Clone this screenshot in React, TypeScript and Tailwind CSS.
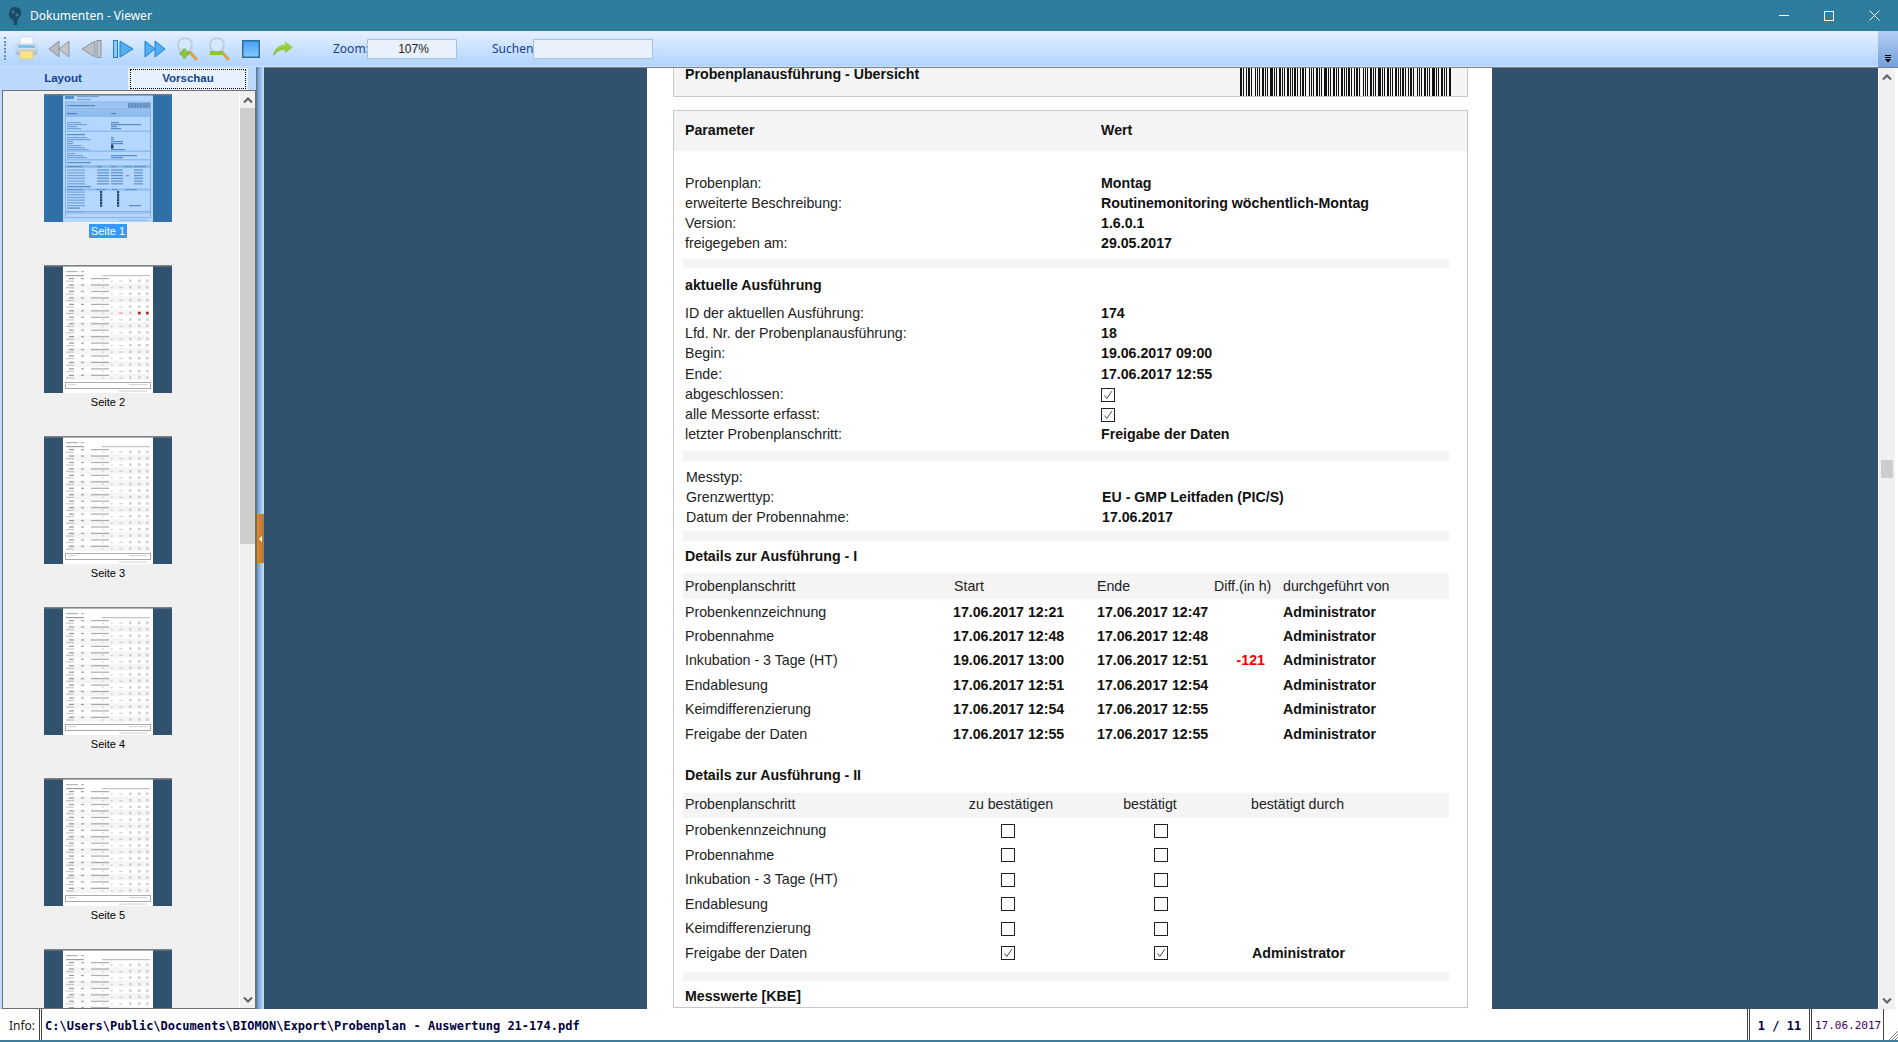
import React from "react";

const sans = "font-['Liberation_Sans',Arial,sans-serif]";

function Check({ checked }: { checked?: boolean }) {
  return (
    <svg width="14" height="14" viewBox="0 0 14 14" className="block">
      <rect x="0.5" y="0.5" width="13" height="13" fill="#fff" stroke="#222" />
      {checked && <path d="M3.5 7.5 L5.8 10.5 L10.8 3.2" fill="none" stroke="#333" strokeWidth="0.9" />}
    </svg>
  );
}

function Row({ label, value, check, shift }: { label: string; value?: string; check?: boolean; shift?: boolean }) {
  return (
    <div className="flex h-[20.3px] items-center">
      <div className={shift ? "w-[416px] pl-px text-[#222]" : "w-[416px] text-[#222]"}>{label}</div>
      {check ? <Check checked /> : <div className={shift ? "pl-px font-bold text-[#111]" : "font-bold text-[#111]"}>{value}</div>}
    </div>
  );
}

const Strip = ({ className }: { className: string }) => <div className={"-ml-[2px] w-[766px] bg-[#f4f4f4] " + className} />;
const Heading = ({ children, className }: { children: React.ReactNode; className: string }) => (
  <div className={"flex h-[20px] items-center font-bold text-[#111] " + className}>{children}</div>
);

const table1 = [
  ["Probenkennzeichnung", "17.06.2017 12:21", "17.06.2017 12:47", ""],
  ["Probennahme", "17.06.2017 12:48", "17.06.2017 12:48", ""],
  ["Inkubation - 3 Tage (HT)", "19.06.2017 13:00", "17.06.2017 12:51", "-121"],
  ["Endablesung", "17.06.2017 12:51", "17.06.2017 12:54", ""],
  ["Keimdifferenzierung", "17.06.2017 12:54", "17.06.2017 12:55", ""],
  ["Freigabe der Daten", "17.06.2017 12:55", "17.06.2017 12:55", ""],
];
const table2 = ["Probenkennzeichnung", "Probennahme", "Inkubation - 3 Tage (HT)", "Endablesung", "Keimdifferenzierung", "Freigabe der Daten"];

function Barcode() {
  const bars: number[] = [];
  let x = 0;
  const pat = [2, 1, 1, 2, 1, 1, 1, 1, 2, 1, 1, 3, 1, 1, 2, 1, 1, 2, 1, 1];
  let i = 0;
  while (x < 211) {
    bars.push(x, pat[i % pat.length]);
    x += pat[i % pat.length] + pat[(i + 7) % pat.length];
    i++;
  }
  return (
    <svg width="212" height="28" className="block">
      {bars.map((v, k) => (k % 2 === 0 ? <rect key={k} x={v} y="0" width={bars[k + 1]} height="28" fill="#111" /> : null))}
    </svg>
  );
}

function ThumbArt({ first, index }: { first?: boolean; index: number }) {
  const ink = first ? "#3f78b8" : "#777";
  const band = first ? "#8fbcec" : "#e4e4e4";
  const frame = first ? "#7fa9d8" : "#b0b0b0";
  const pageFill = first ? "#b3d7ff" : "#ffffff";
  const bg = first ? "#316fa9" : "#30526f";
  const els: React.ReactNode[] = [];
  const text = (x: number, y: number, w: number, o = 0.55, c = ink) =>
    els.push(<rect key={els.length} x={x} y={y} width={w} height="1.2" fill={c} opacity={o} />);
  if (first) {
    els.push(<rect key="l" x="21" y="2" width="9" height="3" fill="#4d8fd0" />);
    text(33, 2, 22); text(33, 5, 14);
    els.push(<rect key="h" x="21.5" y="8" width="85" height="7" fill="#9cc5f2" stroke={frame} strokeWidth="0.7" />);
    text(23, 11, 28, 0.8);
    for (let k = 0; k < 22; k++) els.push(<rect key={"b" + k} x={84 + k} y="9" width={k % 3 === 2 ? 0.4 : 0.7} height="5" fill="#2d5f96" opacity="0.75" />);
    els.push(<rect key="f" x="21.5" y="16" width="85" height="103" fill="none" stroke={frame} strokeWidth="0.8" />);
    els.push(<rect key="hd" x="22" y="17" width="84" height="6" fill={band} />);
    text(23, 19, 10, 0.8); text(67, 19, 5, 0.8);
    [28, 30, 32, 34].forEach((y, n) => { text(23, y, [14, 20, 10, 14][n]); text(67, y, [8, 30, 6, 10][n], 0.8); });
    els.push(<rect key="s1" x="22" y="36.5" width="84" height="1.5" fill={band} />);
    text(23, 40, 18, 0.8);
    [43, 45, 47, 49, 51, 53, 55].forEach((y, n) => { text(23, y, [20, 24, 6, 6, 14, 18, 22][n]); });
    [43, 45, 47, 49, 55].forEach((y, n) => text(67, y, [3, 3, 12, 12, 14][n], 0.8));
    els.push(<rect key="c1" x="67" y="50.5" width="2.4" height="4" fill="#1c3f66" />);
    els.push(<rect key="s2" x="22" y="56.5" width="84" height="1.5" fill={band} />);
    [59, 61, 63].forEach((y, n) => { text(23, y, [8, 16, 20][n]); if (n) text(67, y, [0, 26, 12][n], 0.8); });
    els.push(<rect key="s3" x="22" y="65" width="84" height="1.5" fill={band} />);
    text(23, 68, 24, 0.8);
    els.push(<rect key="b1" x="22" y="71" width="84" height="3" fill={band} />);
    text(23, 72, 16); text(53, 72, 5); text(67, 72, 5); text(80, 72, 8); text(90, 72, 12);
    for (let n = 0; n < 6; n++) {
      const y = 75.5 + n * 2.75;
      text(23, y, 18); text(53, y, 12, 0.75); text(67, y, 12, 0.75); text(90, y, 9, 0.75);
      if (n === 2) els.push(<rect key="red" x="82" y={y} width="3" height="1.2" fill="#d06a80" />);
    }
    text(23, 92, 24, 0.8);
    els.push(<rect key="b2" x="22" y="94.5" width="84" height="2" fill={band} />);
    text(23, 95, 16); text(52, 95, 10); text(68, 95, 6); text(81, 95, 12);
    for (let n = 0; n < 6; n++) {
      const y = 97.5 + n * 2.7;
      text(23, y, 18);
      els.push(<rect key={"ca" + n} x="56" y={y - 0.5} width="2.2" height="2.2" fill="#1c3f66" />);
      els.push(<rect key={"cb" + n} x="73" y={y - 0.5} width="2.2" height="2.2" fill="#1c3f66" />);
    }
    text(85, 111, 12, 0.8);
    text(23, 113.5, 13, 0.8); text(23, 117, 18);
    els.push(<rect key="ft" x="21.5" y="117.5" width="85" height="6" fill="none" stroke={frame} strokeWidth="0.8" />);
    text(75, 125.5, 28, 0.35);
  } else {
    text(22, 6, 12); text(37, 6, 3);
    text(22, 10, 10, 0.7); text(32, 10, 8, 0.7); text(58, 10, 48, 0.45);
    const count = index === 1 ? 17 : 16;
    for (let n = 0; n < count; n++) {
      const y = 13 + n * 6.45;
      if (n % 2 === 1) els.push(<rect key={"z" + n} x="22" y={y - 1} width="84" height="6.4" fill="#f5f5f5" />);
      text(25, y, 5, 0.75); text(37, y, 3, 0.7); text(47, y, 18, 0.6);
      text(22, y + 2.6, 8, 0.4);
      text(58, y + 2.5, 1.5, 0.4); text(67, y + 2.5, 1.5, 0.4); text(75, y + 2.5, 4, 0.3);
      [85, 94, 102].forEach((cx) => els.push(<rect key={"m" + n + cx} x={cx} y={y + 1.5} width="2.6" height="2.6" fill="#d0d0d0" />));
    }
    if (index === 2) {
      const y = 13 + 5 * 6.45;
      els.push(<rect key="r0" x="75" y={y + 2} width="4" height="1.6" fill="#f0b0b0" />);
      els.push(<rect key="r1" x="94" y={y + 1.5} width="2.6" height="2.6" fill="#b02020" />);
      els.push(<rect key="r2" x="102" y={y + 1.5} width="2.6" height="2.6" fill="#b02020" />);
    }
    els.push(<rect key="ft" x="21.5" y="117.5" width="85" height="6" fill="none" stroke="#aaa" strokeWidth="1" />);
    text(24, 119, 8, 0.3); text(85, 119, 18, 0.3);
    text(75, 125.5, 28, 0.3);
  }
  return (
    <svg width="128" height="128" viewBox="0 0 128 128" className="block">
      <rect width="128" height="128" fill={bg} />
      <rect width="128" height="1.5" fill={first ? "#6c7a88" : "#808080"} />
      <rect x="19" y="1.5" width="90" height="126.5" fill={pageFill} />
      <g style={{ filter: "blur(0.3px)" }}>{els}</g>
    </svg>
  );
}

function Thumb({ n }: { n: number }) {
  return (
    <div className="flex h-[171px] w-[128px] shrink-0 flex-col items-center">
      <ThumbArt first={n === 1} index={n} />
      {n < 6 && (
        <div className="mt-[2px] flex h-[14px] items-center">
          <span className={n === 1 ? "bg-[#3399ff] px-[2px] text-[11px] leading-[14px] text-white" : "px-[2px] text-[11px] leading-[14px] text-black"}>Seite {n}</span>
        </div>
      )}
    </div>
  );
}

const Chevron = ({ up }: { up?: boolean }) => (
  <svg width="10" height="8" viewBox="0 0 10 8">
    <path d={up ? "M1 6.5 L5 2.5 L9 6.5" : "M1 1.5 L5 5.5 L9 1.5"} fill="none" stroke="#606060" strokeWidth="2" />
  </svg>
);

const icons: Record<string, React.ReactNode> = {
  print: (
    <svg width="24" height="26" viewBox="0 0 24 26">
      <defs>
        <linearGradient id="pb" x1="0" y1="0" x2="0" y2="1"><stop offset="0" stopColor="#eef3f8" /><stop offset="1" stopColor="#a8bccf" /></linearGradient>
      </defs>
      <rect x="5" y="1" width="13" height="8" fill="#f6f8fb" stroke="#c8d3dd" strokeWidth="0.7" />
      <rect x="1" y="8" width="21" height="11" rx="2" fill="url(#pb)" stroke="#a7b6c5" strokeWidth="0.6" />
      <rect x="3" y="9" width="17" height="3" fill="#7cc0ee" />
      <rect x="5" y="15" width="13" height="8" fill="#f8e48c" stroke="#d9c36b" strokeWidth="0.6" />
    </svg>
  ),
  first: (
    <svg width="22" height="22" viewBox="0 0 22 22">
      <path d="M11 3 V19 L1 11 Z" fill="#b9bdc2" stroke="#8c9299" />
      <path d="M21 3 V19 L11 11 Z" fill="#c3c6ca" stroke="#8c9299" />
    </svg>
  ),
  prev: (
    <svg width="22" height="22" viewBox="0 0 22 22">
      <path d="M15 3 V19 L2 11 Z" fill="#bcc0c5" stroke="#8c9299" />
      <rect x="17" y="2.5" width="4" height="17" fill="#c3c6ca" stroke="#8c9299" />
    </svg>
  ),
  next: (
    <svg width="22" height="22" viewBox="0 0 22 22">
      <rect x="1.5" y="2.5" width="4" height="17" fill="#8cc8f8" stroke="#1f7fc4" />
      <path d="M8 3 V19 L21 11 Z" fill="#55aef2" stroke="#1f7fc4" />
    </svg>
  ),
  last: (
    <svg width="22" height="22" viewBox="0 0 22 22">
      <path d="M1 3 V19 L11 11 Z" fill="#55aef2" stroke="#1f7fc4" />
      <path d="M11 3 V19 L21 11 Z" fill="#55aef2" stroke="#1f7fc4" />
    </svg>
  ),
  zin: (
    <svg width="22" height="24" viewBox="0 0 22 24">
      <path d="M13 14 L20 22" stroke="#dca050" strokeWidth="3" strokeLinecap="round" />
      <circle cx="9" cy="8" r="7" fill="#d3e9fb" stroke="#b8c8d8" strokeWidth="1.6" />
      <path d="M7 12 H10 V15 H13 V18 H10 V21 H7 V18 H4 V15 H7 Z" fill="#8cc63f" stroke="#5f9a22" strokeWidth="0.5" />
    </svg>
  ),
  zout: (
    <svg width="22" height="24" viewBox="0 0 22 24">
      <path d="M13 14 L20 22" stroke="#dca050" strokeWidth="3" strokeLinecap="round" />
      <circle cx="9" cy="8" r="7" fill="#d3e9fb" stroke="#b8c8d8" strokeWidth="1.6" />
      <rect x="2" y="14" width="13" height="4" fill="#8cc63f" />
    </svg>
  ),
  page: (
    <svg width="18" height="18" viewBox="0 0 18 18">
      <defs>
        <linearGradient id="pg" x1="0" y1="0" x2="0" y2="1"><stop offset="0" stopColor="#44a2f6" /><stop offset="1" stopColor="#88c8fb" /></linearGradient>
      </defs>
      <rect x="0.75" y="0.75" width="16.5" height="16.5" fill="url(#pg)" stroke="#2b6f9e" strokeWidth="1.5" />
    </svg>
  ),
  arrow: (
    <svg width="22" height="18" viewBox="0 0 22 18">
      <defs>
        <linearGradient id="ar" x1="0" y1="0" x2="0" y2="1"><stop offset="0" stopColor="#a8dc4a" /><stop offset="1" stopColor="#7cb82a" /></linearGradient>
      </defs>
      <path d="M13 1 L21 7.5 L13 13 V10 C8 9.5 4 11.5 1 17 C1.5 10 6 5 13 4.5 Z" fill="url(#ar)" />
    </svg>
  ),
};

function ToolIcon({ name }: { name: string }) {
  return <div className="flex h-full w-[32px] items-center justify-center">{icons[name]}</div>;
}

export default function App() {
  return (
    <div className={"flex h-[1042px] w-[1898px] flex-col overflow-hidden bg-white text-[14.2px] " + sans}>
      {/* title bar */}
      <div className="flex h-[31px] shrink-0 items-center bg-[#2e7d9e] text-white">
        <div className="flex w-[30px] justify-center">
          <svg width="16" height="20" viewBox="0 0 16 20">
            <path d="M8 1 C12 1 15 4 14 8 C13.5 11 11 12 10.5 14 L10 19 H7 L6.5 14 C3 13 1 10 2 6 C3 3 5 1 8 1 Z" fill="#1c4a63" />
            <circle cx="6" cy="6" r="1.5" fill="#3c7c9c" /><circle cx="10" cy="9" r="1.5" fill="#3c7c9c" />
          </svg>
        </div>
        <span className="font-['Noto_Sans',sans-serif] text-[12px]">Dokumenten - Viewer</span>
        <div className="ml-auto flex h-full items-center">
          <div className="flex w-[45px] justify-center"><div className="h-px w-[10px] bg-white" /></div>
          <div className="flex w-[45px] justify-center"><div className="h-[10px] w-[10px] border border-white" /></div>
          <div className="flex w-[46px] justify-center">
            <svg width="11" height="11" viewBox="0 0 11 11"><path d="M0.5 0.5 L10.5 10.5 M10.5 0.5 L0.5 10.5" stroke="#fff" strokeWidth="1" /></svg>
          </div>
          <div className="w-px" />
        </div>
      </div>

      {/* toolbar */}
      <div className="flex h-[36px] shrink-0 bg-[#cfe2fb]">
        <div className="flex h-[35px] flex-1 items-center rounded-r-[2px] bg-gradient-to-b from-[#e4f0ff] to-[#b0d3ff] pl-[4px] text-[12px] text-[#15428b]">
          <div className="flex h-[23px] w-[2px] flex-col justify-between">
            {[0, 1, 2, 3, 4, 5, 6].map((i) => <div key={i} className="h-[2px] w-[2px] bg-[#5f8fc8]" />)}
          </div>
          <div className="ml-[5px] flex h-full items-center">
            {["print", "first", "prev", "next", "last", "zin", "zout", "page", "arrow"].map((n) => <ToolIcon key={n} name={n} />)}
          </div>
          <span className="ml-[34px] w-[34px] font-['Noto_Sans',sans-serif] text-[12px]">Zoom:</span>
          <div className="flex h-[20px] w-[90px] items-center justify-center border border-[#a7bfe0] bg-[#e8f1fc] pl-[3px] text-[#222]">107%</div>
          <span className="ml-[35px] w-[41px] font-['Noto_Sans',sans-serif] text-[12px]">Suchen:</span>
          <div className="h-[20px] w-[120px] border border-[#a7bfe0] bg-[#e8f1fc]" />
        </div>
        <div className="flex h-[36px] w-[20px] items-end justify-center bg-gradient-to-b from-[#b5cff2] to-[#73a1dc] pb-[4px]">
          <svg width="8" height="8" viewBox="0 0 8 8"><path d="M1 0.5 H7 M1 2.5 H7" stroke="#000" /><path d="M1 4 H7 L4 7.5 Z" fill="#000" /></svg>
        </div>
      </div>

      {/* middle */}
      <div className="flex min-h-0 flex-1">
        {/* left panel */}
        <div className="flex w-[256px] shrink-0 flex-col bg-[#bcd8fd] pl-[2px] pt-px">
          <div className="flex h-[22px] shrink-0 text-[11.5px] font-bold text-[#15428b]">
            <div className="mr-[4px] flex w-[122px] items-center justify-center">Layout</div>
            <div className="flex w-[120px] items-center justify-center rounded-t-[2px] bg-[#e8f2fe] px-[2px] py-[1px]">
              <div className="flex h-full w-full items-center justify-center border border-dotted border-black">Vorschau</div>
            </div>
          </div>
          <div className="flex min-h-0 flex-1 border border-[#707070] bg-[#f0f0f0]">
            <div className="flex min-w-0 flex-1 flex-col items-start overflow-hidden pl-[41px] pt-[3px]">
              {[1, 2, 3, 4, 5, 6].map((n) => <Thumb key={n} n={n} />)}
            </div>
            <div className="flex w-[16px] shrink-0 flex-col border-l border-white bg-[#f0f0f0]">
              <div className="flex h-[17px] shrink-0 items-center justify-center"><Chevron up /></div>
              <div className="h-[436px] shrink-0 bg-[#cdcdcd]" />
              <div className="flex-1" />
              <div className="flex h-[17px] shrink-0 items-center justify-center"><Chevron /></div>
            </div>
          </div>
        </div>
        {/* splitter */}
        <div className="flex w-[8px] shrink-0 flex-col border-l border-[#707070] bg-gradient-to-r from-[#5d94d6] to-[#cfe1f9]">
          <div className="mt-[447px] flex h-[49px] items-center justify-center bg-gradient-to-r from-[#e8860f] to-[#ad7a3f]">
            <svg width="4" height="6" viewBox="0 0 4 6"><path d="M3 0 V6 L0 3 Z" fill="#fff" /></svg>
          </div>
        </div>
        {/* main */}
        <div className="flex min-w-0 flex-1 flex-col border-t border-[#808080]">
          <div className="flex min-h-0 flex-1">
            <div className="min-w-0 flex-1 overflow-hidden bg-[#30526f] pl-[383px]">
              <div className="h-full w-[845px] overflow-hidden bg-white pl-[26px] text-black">
                <div className="flex h-[29px] w-[795px] items-start justify-between border border-t-0 border-[#c8c8c8] bg-[#f4f4f4] pl-[11px] pr-[15px]">
                  <span className="font-bold leading-[12px] text-[#111]">Probenplanausführung - Übersicht</span>
                  <Barcode />
                </div>
                <div className="mt-[13px] w-[795px] border border-[#c8c8c8] pl-[11px]">
                  <div className="-ml-[11px] flex h-[40px] items-center bg-[#f4f4f4] pl-[11px] font-bold text-[#111]">
                    <div className="w-[416px]">Parameter</div>
                    <div>Wert</div>
                  </div>
                  <div className="mt-[22px]">
                    <Row label="Probenplan:" value="Montag" />
                    <Row label="erweiterte Beschreibung:" value="Routinemonitoring wöchentlich-Montag" />
                    <Row label="Version:" value="1.6.0.1" />
                    <Row label="freigegeben am:" value="29.05.2017" />
                  </div>
                  <Strip className="mt-[5px] h-[9px]" />
                  <Heading className="mt-[7px]">aktuelle Ausführung</Heading>
                  <div className="mt-[8px]">
                    <Row label="ID der aktuellen Ausführung:" value="174" />
                    <Row label="Lfd. Nr. der Probenplanausführung:" value="18" />
                    <Row label="Begin:" value="19.06.2017 09:00" />
                    <Row label="Ende:" value="17.06.2017 12:55" />
                    <Row label="abgeschlossen:" check />
                    <Row label="alle Messorte erfasst:" check />
                    <Row label="letzter Probenplanschritt:" value="Freigabe der Daten" />
                  </div>
                  <Strip className="mt-[6px] h-[10px]" />
                  <div className="mt-[6px]">
                    <Row label="Messtyp:" shift />
                    <Row label="Grenzwerttyp:" value="EU - GMP Leitfaden (PIC/S)" shift />
                    <Row label="Datum der Probennahme:" value="17.06.2017" shift />
                  </div>
                  <Strip className="mt-[3px] h-[10px]" />
                  <Heading className="mt-[5px]">Details zur Ausführung - I</Heading>
                  <div className="mt-[7px] -ml-[2px] grid h-[26px] w-[766px] grid-cols-[269px_143px_117px_69px_1fr] items-center bg-[#f4f4f4] pl-[2px] text-[#222]">
                    <div>Probenplanschritt</div><div>Start</div><div>Ende</div><div className="whitespace-nowrap">Diff.(in h)</div><div className="whitespace-nowrap">durchgeführt von</div>
                  </div>
                  <div className="mt-px">
                    {table1.map((r) => (
                      <div key={r[0]} className="grid h-[24.4px] grid-cols-[268px_144px_117px_69px_1fr] items-center">
                        <div className="text-[#222]">{r[0]}</div>
                        <div className="font-bold text-[#111]">{r[1]}</div>
                        <div className="font-bold text-[#111]">{r[2]}</div>
                        <div className="pr-[18px] text-right font-bold text-[#f00000]">{r[3]}</div>
                        <div className="font-bold text-[#111]">Administrator</div>
                      </div>
                    ))}
                  </div>
                  <Heading className="mt-[19px]">Details zur Ausführung - II</Heading>
                  <div className="mt-[7px] -ml-[2px] grid h-[25px] w-[766px] grid-cols-[253px_146px_160px_1fr] items-center bg-[#f4f4f4] pl-[2px] text-[#222]">
                    <div>Probenplanschritt</div>
                    <div className="text-center">zu bestätigen</div>
                    <div className="pr-[28px] text-center">bestätigt</div>
                    <div className="pl-[7px]">bestätigt durch</div>
                  </div>
                  <div className="mt-px">
                    {table2.map((t, i) => (
                      <div key={t} className="grid h-[24.5px] grid-cols-[250px_146px_160px_1fr] items-center">
                        <div className="text-[#222]">{t}</div>
                        <div className="flex justify-center"><Check checked={i === 5} /></div>
                        <div className="flex justify-center"><Check checked={i === 5} /></div>
                        <div className="pl-[11px] font-bold text-[#111]">{i === 5 ? "Administrator" : ""}</div>
                      </div>
                    ))}
                  </div>
                  <Strip className="mt-[6px] h-[9px]" />
                  <Heading className="mt-[6px]">Messwerte [KBE]</Heading>
                </div>
              </div>
            </div>
            {/* right scrollbar */}
            <div className="flex w-[17px] shrink-0 flex-col border-l border-white bg-[#f0f0f0]">
              <div className="flex h-[17px] shrink-0 items-center justify-center"><Chevron up /></div>
              <div className="mx-[2px] mt-[375px] h-[18px] shrink-0 bg-[#cdcdcd]" />
              <div className="flex-1" />
              <div className="flex h-[17px] shrink-0 items-center justify-center"><Chevron /></div>
            </div>
            <div className="w-[3px] shrink-0 bg-white" />
          </div>
        </div>
      </div>

      {/* status bar */}
      <div className="flex h-[33px] shrink-0 border-b-2 border-[#3f7f9e] bg-white font-['DejaVu_Sans_Mono',monospace] text-[12px] leading-none">
        <div className="flex w-[39px] items-center justify-end pr-[4px] pt-[2px] font-['Noto_Sans',sans-serif] text-[12px] text-[#222]">Info:</div>
        <div className="flex flex-1 items-center border-l-[3px] border-double border-[#444] pl-[3px] pt-[2px] font-bold text-[#000040]">
          C:\Users\Public\Documents\BIOMON\Export\Probenplan - Auswertung 21-174.pdf
        </div>
        <div className="flex w-[62px] items-center justify-center border-l-[3px] border-double border-[#444] pt-[2px] font-bold text-[#000040]">1 / 11</div>
        <div className="flex w-[74px] items-center overflow-hidden whitespace-nowrap border-l-[3px] border-double border-[#444] pl-[3px] pt-[2px] text-[11px] text-[#400060]">17.06.2017</div>
        <div className="flex w-[15px] items-end justify-end border-l border-[#444]">
          <svg width="10" height="10" viewBox="0 0 10 10"><path d="M10 1 L1 10 M10 4 L4 10 M10 7 L7 10" stroke="#888" fill="none" /></svg>
        </div>
      </div>
    </div>
  );
}
